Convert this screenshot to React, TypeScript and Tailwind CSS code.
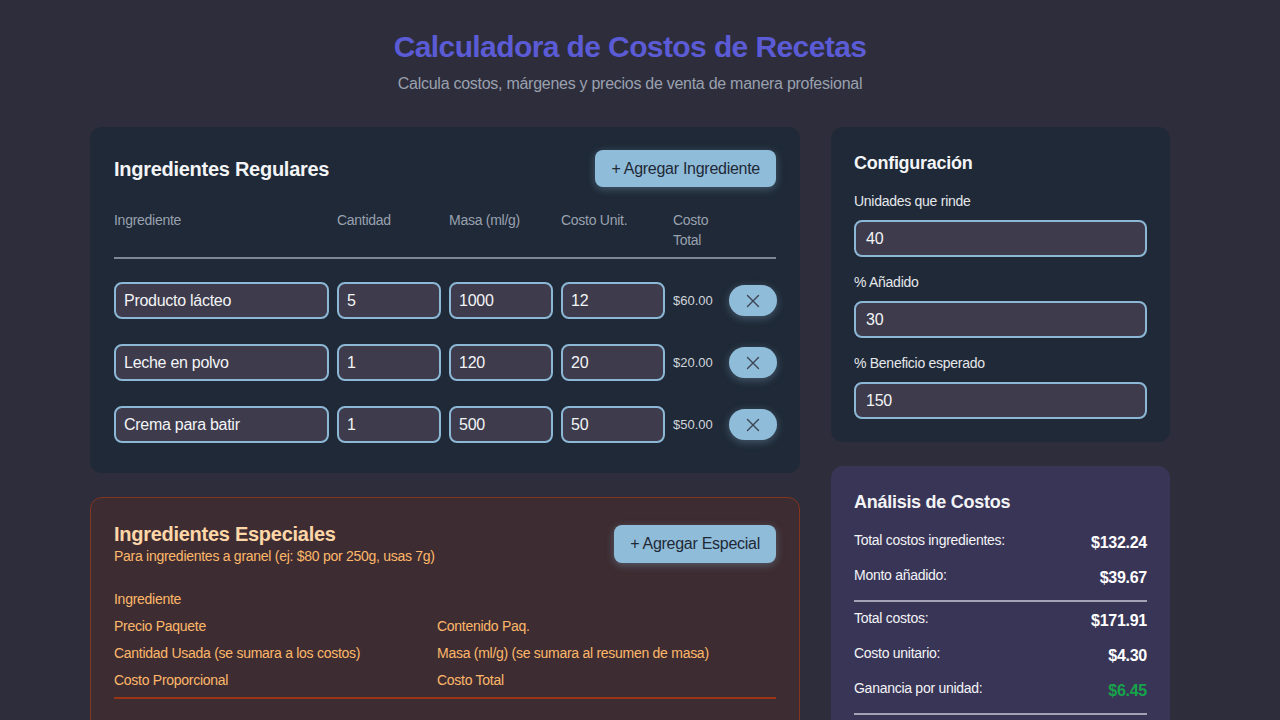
import React from 'react';

type Ingredient = {
  id: number;
  name: string;
  qty: string;
  mass: string;
  unit: string;
  total: string;
};

const ingredients: Ingredient[] = [
  { id: 1, name: 'Producto lácteo', qty: '5', mass: '1000', unit: '12', total: '$60.00' },
  { id: 2, name: 'Leche en polvo', qty: '1', mass: '120', unit: '20', total: '$20.00' },
  { id: 3, name: 'Crema para batir', qty: '1', mass: '500', unit: '50', total: '$50.00' },
];

const cellInput =
  'h-[37px] w-full rounded-lg border-2 border-[#8cb8d6] bg-[#3d3b4c] px-2 text-base text-gray-100 outline-none';

const btn =
  'rounded-lg bg-[#8fbcd9] px-4 text-base text-[#1f2937] shadow-[0_2px_8px_rgba(143,188,217,0.35)]';

function XIcon() {
  return (
    <svg width="14" height="14" viewBox="0 0 14 14" fill="none">
      <path d="M1.5 1.5 L12.5 12.5 M12.5 1.5 L1.5 12.5" stroke="#3b4452" strokeWidth="1.4" strokeLinecap="round" />
    </svg>
  );
}

function ConfigField({ label, value }: { label: string; value: string }) {
  return (
    <div className="mb-[15px] last:mb-0">
      <p className="mb-[9px] text-sm leading-5 text-gray-200">{label}</p>
      <input
        defaultValue={value}
        className="h-[37px] w-full rounded-lg border-2 border-[#8cb8d6] bg-[#3d3b4c] px-2.5 text-base text-gray-100 outline-none"
      />
    </div>
  );
}

function Row({ label, value, green }: { label: string; value: string; green?: boolean }) {
  return (
    <div className="mb-[10px] flex items-start justify-between">
      <span className="text-sm leading-5 text-gray-100">{label}</span>
      <span className={`mt-px text-base font-bold leading-6 ${green ? 'text-[#16a34a]' : 'text-white'}`}>{value}</span>
    </div>
  );
}

export default function App() {
  return (
    <div className="h-[720px] overflow-hidden bg-[#2e2d3b] font-['Liberation_Sans',Arial,sans-serif] tracking-[-0.017em]">
      <div className="ml-[90px] w-[1080px] pt-[29px]">
        {/* header */}
        <div className="mb-[31px] text-center">
          <h1 className="mb-[7px] text-3xl font-bold leading-9 tracking-[-0.02em] text-[#5b5bd6]">Calculadora de Costos de Recetas</h1>
          <p className="text-base leading-6 text-gray-400">Calcula costos, márgenes y precios de venta de manera profesional</p>
        </div>

        <div className="grid grid-cols-[710px_1fr] items-start gap-[31px]">
          {/* left column */}
          <div className="flex flex-col gap-6">
            <div className="rounded-xl bg-[#1f2937] px-6 pt-[23px] pb-6">
              <div className="mb-[23px] flex items-center justify-between">
                <h2 className="text-xl font-bold text-gray-100">Ingredientes Regulares</h2>
                <button className={`${btn} h-[37px]`}>+ Agregar Ingrediente</button>
              </div>

              <div className="grid grid-cols-[215px_104px_104px_104px_48px_48px] gap-2 border-b-2 border-[#7d8796] pb-[7px] text-sm leading-5 text-gray-400">
                <span>Ingrediente</span>
                <span>Cantidad</span>
                <span>Masa (ml/g)</span>
                <span>Costo Unit.</span>
                <span>Costo Total</span>
                <span></span>
              </div>

              <div className="mt-[23px] mb-[6px] flex flex-col gap-[25px]">
                {ingredients.map((ing) => (
                  <div key={ing.id} className="grid grid-cols-[215px_104px_104px_104px_48px_48px] items-center gap-2">
                    <input defaultValue={ing.name} className={cellInput} />
                    <input defaultValue={ing.qty} className={cellInput} />
                    <input defaultValue={ing.mass} className={cellInput} />
                    <input defaultValue={ing.unit} className={cellInput} />
                    <span className="text-[13px] tracking-normal text-gray-300">{ing.total}</span>
                    <button className="flex h-[31px] w-12 items-center justify-center rounded-full bg-[#8fbcd9] shadow-[0_2px_8px_rgba(143,188,217,0.35)]">
                      <XIcon />
                    </button>
                  </div>
                ))}
              </div>
            </div>

            <div className="rounded-xl border border-[#84351f] bg-[#3d2c31] px-[23px] pt-6 pb-[23px]">
              <div className="mb-[23px] flex items-center justify-between">
                <div>
                  <h2 className="text-xl font-bold leading-6 text-orange-200">Ingredientes Especiales</h2>
                  <p className="text-sm leading-5 text-orange-300">Para ingredientes a granel (ej: $80 por 250g, usas 7g)</p>
                </div>
                <button className={`${btn} h-[38px]`}>+ Agregar Especial</button>
              </div>

              <div className="grid grid-cols-[323px_1fr] gap-y-[7px] border-b-2 border-[#9a3412] pb-[7px] text-sm leading-5 text-orange-300">
                <span className="col-span-2">Ingrediente</span>
                <span>Precio Paquete</span>
                <span>Contenido Paq.</span>
                <span>Cantidad Usada (se sumara a los costos)</span>
                <span>Masa (ml/g) (se sumara al resumen de masa)</span>
                <span>Costo Proporcional</span>
                <span>Costo Total</span>
              </div>
              <div className="h-40"></div>
            </div>
          </div>

          {/* right column */}
          <div className="flex flex-col gap-6">
            <div className="rounded-xl bg-[#1f2937] px-[23px] pt-6 pb-[23px]">
              <h3 className="mb-4 text-lg font-bold leading-6 text-gray-100">Configuración</h3>
              <ConfigField label="Unidades que rinde" value="40" />
              <ConfigField label="% Añadido" value="30" />
              <ConfigField label="% Beneficio esperado" value="150" />
            </div>

            <div className="rounded-xl bg-[#393557] px-[23px] pt-6 pb-6">
              <h3 className="mb-4 text-lg font-bold leading-6 text-gray-100">Análisis de Costos</h3>
              <Row label="Total costos ingredientes:" value="$132.24" />
              <Row label="Monto añadido:" value="$39.67" />
              <div className="mb-1.5 h-0.5 bg-[#a3a3b5]"></div>
              <Row label="Total costos:" value="$171.91" />
              <Row label="Costo unitario:" value="$4.30" />
              <Row label="Ganancia por unidad:" value="$6.45" green />
              <div className="h-0.5 bg-[#a3a3b5]"></div>
              <div className="h-40"></div>
            </div>
          </div>
        </div>
      </div>
    </div>
  );
}
